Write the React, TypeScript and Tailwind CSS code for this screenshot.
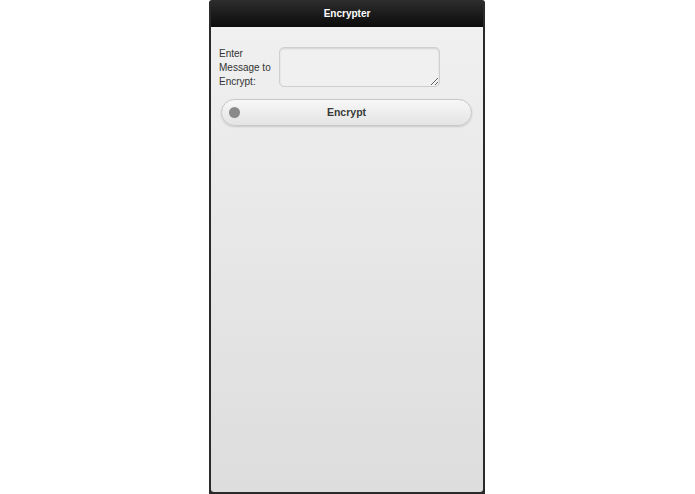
import React from "react";

export default function App() {
  return (
    <div className="w-[695px] h-[494px] bg-white flex" style={{ fontFamily: '"Liberation Sans", Arial, sans-serif' }}>
      <div className="ml-[209px] w-[276px] h-[494px] bg-[#2a2a2a] rounded-t-[3px] px-[2px] pb-[2px] flex flex-col">
        <div className="h-[27px] shrink-0 bg-gradient-to-b from-[#2e2e2e] to-[#0c0c0c] rounded-t-[3px] flex items-center justify-center">
          <span className="text-white text-[10px] font-bold">Encrypter</span>
        </div>
        <div className="flex-1 bg-gradient-to-b from-[#f0f0f0] to-[#dddddd] rounded-b-[3px] pl-[8px] pr-[11px] pt-[20px]">
          <div className="flex items-start">
            <div className="w-[60px] text-[10px] leading-[14px] text-[#333]">
              Enter
              <br />
              Message to
              <br />
              Encrypt:
            </div>
            <textarea className="w-[161px] h-[40px] bg-[#f0f0f0] border border-[#cfcfcf] rounded-[5px] resize-y shadow-[inset_0_1px_2px_rgba(0,0,0,0.12)] outline-none" />
          </div>
          <button className="mt-[10px] ml-[2px] w-[251px] h-[27px] rounded-[14px] border border-[#c8c8c8] bg-gradient-to-b from-[#f7f7f7] to-[#e4e4e4] shadow-[0_1px_2px_rgba(0,0,0,0.15)] relative flex items-center justify-center">
            <span className="absolute left-[7px] top-[7px] w-[11px] h-[11px] rounded-full bg-[#8a8a8a]" />
            <span className="text-[10.5px] text-[#3a3a3a] font-bold">Encrypt</span>
          </button>
        </div>
      </div>
    </div>
  );
}
